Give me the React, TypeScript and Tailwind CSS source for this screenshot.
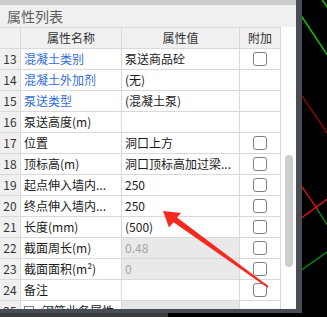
import { FC } from "react";

type Row = {
  no: number;
  name: string;
  value: string;
  link?: boolean;
  readonly?: boolean;
  check?: boolean;
};

const rows: Row[] = [
  { no: 13, name: "混凝土类别", value: "泵送商品砼", link: true, check: true },
  { no: 14, name: "混凝土外加剂", value: "(无)", link: true },
  { no: 15, name: "泵送类型", value: "(混凝土泵)", link: true },
  { no: 16, name: "泵送高度(m)", value: "" },
  { no: 17, name: "位置", value: "洞口上方", check: true },
  { no: 18, name: "顶标高(m)", value: "洞口顶标高加过梁...", check: true },
  { no: 19, name: "起点伸入墙内...", value: "250", check: true },
  { no: 20, name: "终点伸入墙内...", value: "250", check: true },
  { no: 21, name: "长度(mm)", value: "(500)", check: true },
  { no: 22, name: "截面周长(m)", value: "0.48", readonly: true, check: true },
  { no: 23, name: "截面面积(m²)", value: "0", readonly: true, check: true },
  { no: 24, name: "备注", value: "", check: true },
];

const cell = "h-[21px] border-b border-r border-[#d9d9d9] leading-[20px] overflow-hidden whitespace-nowrap";

const CheckBox: FC = () => (
  <span className="mt-[3px] block h-[14px] w-[14px] rounded-[3px] border border-[#808080] bg-white" />
);

// CAD drawing behind the panel
const CadLines: FC = () => (
  <svg className="absolute inset-0" width="327" height="317" viewBox="0 0 327 317">
    <line x1="296" y1="8" x2="330" y2="59" stroke="#00d000" strokeWidth="1.4" />
    <line x1="321" y1="-2" x2="330" y2="11" stroke="#00d000" strokeWidth="1.4" />
    <line x1="298" y1="90" x2="330" y2="137" stroke="#b00000" strokeWidth="1.2" />
    <line x1="300" y1="184" x2="318" y2="210" stroke="#ff1010" strokeWidth="1.3" />
    <line x1="300" y1="219" x2="330" y2="197" stroke="#ff1010" strokeWidth="1.3" />
    <line x1="317" y1="209" x2="330" y2="229" stroke="#00a000" strokeWidth="1.2" />
    <line x1="300" y1="271" x2="330" y2="250" stroke="#00a000" strokeWidth="1.2" />
  </svg>
);

// red annotation arrow drawn on top of the panel
const Arrow: FC = () => (
  <svg className="pointer-events-none absolute inset-0 z-20" width="327" height="317" viewBox="0 0 327 317">
    <polygon
      points="163,211 181,213 177,217.5 268.6,286.3 267.6,287.7 173.5,222.3 169,227.5"
      fill="#f42a1e"
    />
  </svg>
);

export default function App() {
  return (
    <div
      className="relative h-[317px] w-[327px] overflow-hidden bg-black"
      style={{ fontFamily: '"Noto Sans CJK SC", "Microsoft YaHei", sans-serif' }}
    >
      <CadLines />
      <div className="relative z-10 flex w-[302px] flex-col border-r-[6px] border-b-4 border-[#474c55] bg-[#f0f0f0]">
        <div className="flex h-[5px] justify-end bg-[#cdcdcd] pr-[5px]" />
        <div className="h-[22px] px-[7px] text-[14px] leading-[22px] text-[#5c5c5c]">属性列表</div>
        <div className="flex h-[282px] overflow-hidden">
          <div className="grid w-[281px] grid-cols-[21px_101px_118px_41px] content-start border-t border-[#d9d9d9] text-[12px] text-[#1a1a1a]">
            <div className={`${cell} bg-[#f0f0f0]`} />
            <div className={`${cell} bg-[#f0f0f0] text-center text-[#333]`}>属性名称</div>
            <div className={`${cell} bg-[#f0f0f0] text-center text-[#333]`}>属性值</div>
            <div className={`${cell} bg-[#f0f0f0] text-center text-[#333]`}>附加</div>
            {rows.map((r) => (
              <div key={r.no} className="contents">
                <div className={`${cell} bg-[#f0f0f0] text-center text-[#333]`}>{r.no}</div>
                <div className={`${cell} bg-white pl-[3px] ${r.link ? "text-[#2f6ce0]" : ""}`}>{r.name}</div>
                <div
                  className={`${cell} pl-[3px] ${r.readonly ? "bg-[#e9e9e9] text-[#a3a3a3]" : "bg-white"}`}
                >
                  {r.value}
                </div>
                <div className={`${cell} flex justify-center bg-white`}>{r.check && <CheckBox />}</div>
              </div>
            ))}
            <div className={`${cell} bg-[#f0f0f0] text-center text-[#333]`}>25</div>
            <div className={`${cell} flex items-center gap-[8px] bg-white pl-[3px]`}>
              <span className="flex h-[10px] w-[10px] shrink-0 items-center justify-center border border-[#808080] text-[9px] leading-none text-[#444]">
                +
              </span>
              <span>钢筋业务属性</span>
            </div>
            <div className={`${cell} bg-[#e6e6e6]`} />
            <div className={`${cell} bg-white`} />
          </div>
          <div className="w-[15px] bg-white pl-[4px] pt-[128px]">
            <div className="h-[112px] w-[8px] rounded-full bg-[#cdcdcd]" />
          </div>
        </div>
      </div>
      <div className="relative z-10 h-[4px] w-[168px] bg-[#3b3b3b]" />
      <Arrow />
    </div>
  );
}
